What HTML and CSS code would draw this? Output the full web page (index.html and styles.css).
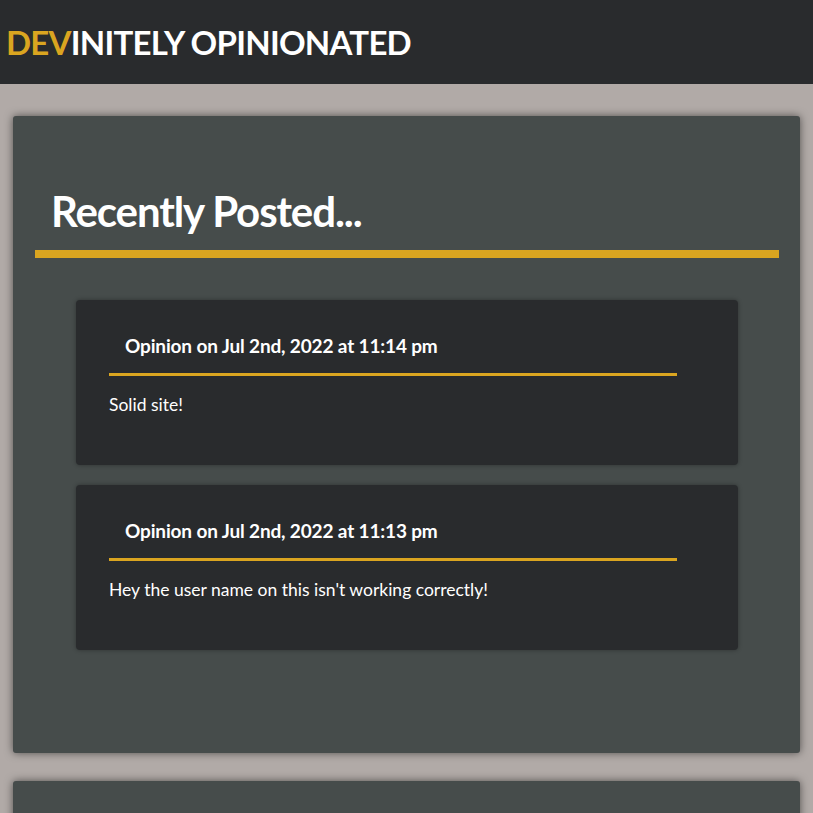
FILE: index.html
```html
<!DOCTYPE html>
<html lang="en">
<head>
<meta charset="utf-8">
<title>Devinitely Opinionated</title>
<link rel="stylesheet" href="styles.css">
</head>
<body>
<header class="site-header">
  <h1 class="brand"><span class="brand-accent">DEV</span>INITELY OPINIONATED</h1>
</header>
<main class="page">
  <section class="panel">
    <div class="panel-head">
      <h2 class="panel-title">Recently Posted...</h2>
    </div>
    <div class="post-list">
      <article class="post">
        <h3 class="post-title">Opinion on Jul 2nd, 2022 at 11:14 pm</h3>
        <p class="post-body">Solid site!</p>
      </article>
      <article class="post">
        <h3 class="post-title">Opinion on Jul 2nd, 2022 at 11:13 pm</h3>
        <p class="post-body">Hey the user name on this isn't working correctly!</p>
      </article>
    </div>
  </section>
  <section class="panel panel-next"></section>
</main>
</body>
</html>
```

FILE: styles.css
```css
* { box-sizing: border-box; }

body {
  margin: 0;
  background: #b1aaa7;
  font-family: Lato, "Open Sans", sans-serif;
  color: #ffffff;
}

.site-header {
  height: 84px;
  background: #292b2d;
  display: flex;
  align-items: center;
  padding-left: 6px;
}

.brand {
  margin: 0;
  font-size: 33px;
  font-weight: 700;
  letter-spacing: -0.75px;
  color: #ffffff;
}

.brand-accent { color: #daa520; }

.page {
  padding: 32px 13px 0;
  display: flex;
  flex-direction: column;
  gap: 28px;
}

.panel {
  background: #464c4b;
  border-radius: 3px;
  box-shadow: 0 0 8px rgba(0, 0, 0, 0.55);
  padding: 69.5px 0 103px;
}

.panel-next {
  height: 120px;
  padding: 0;
}

.panel-head {
  margin: 0 21px 0 22px;
  padding: 0 0 14px 16px;
  border-bottom: 8px solid #daa520;
}

.panel-title {
  margin: 0;
  font-size: 42px;
  font-weight: 700;
  letter-spacing: -1.1px;
}

.post-list {
  margin: 42px 62px 0 63px;
  display: flex;
  flex-direction: column;
  gap: 20px;
}

.post {
  background: #292b2d;
  border-radius: 4px;
  box-shadow: 0 0 4px rgba(0, 0, 0, 0.35);
  padding: 34px 0 50px 33px;
}

.post-title {
  width: 568px;
  margin: 0;
  padding: 0 0 16px 16px;
  font-size: 19px;
  font-weight: 700;
  letter-spacing: -0.15px;
  border-bottom: 3px solid #daa520;
}

.post-body {
  margin: 18px 0 0;
  font-size: 17.5px;
}
```
